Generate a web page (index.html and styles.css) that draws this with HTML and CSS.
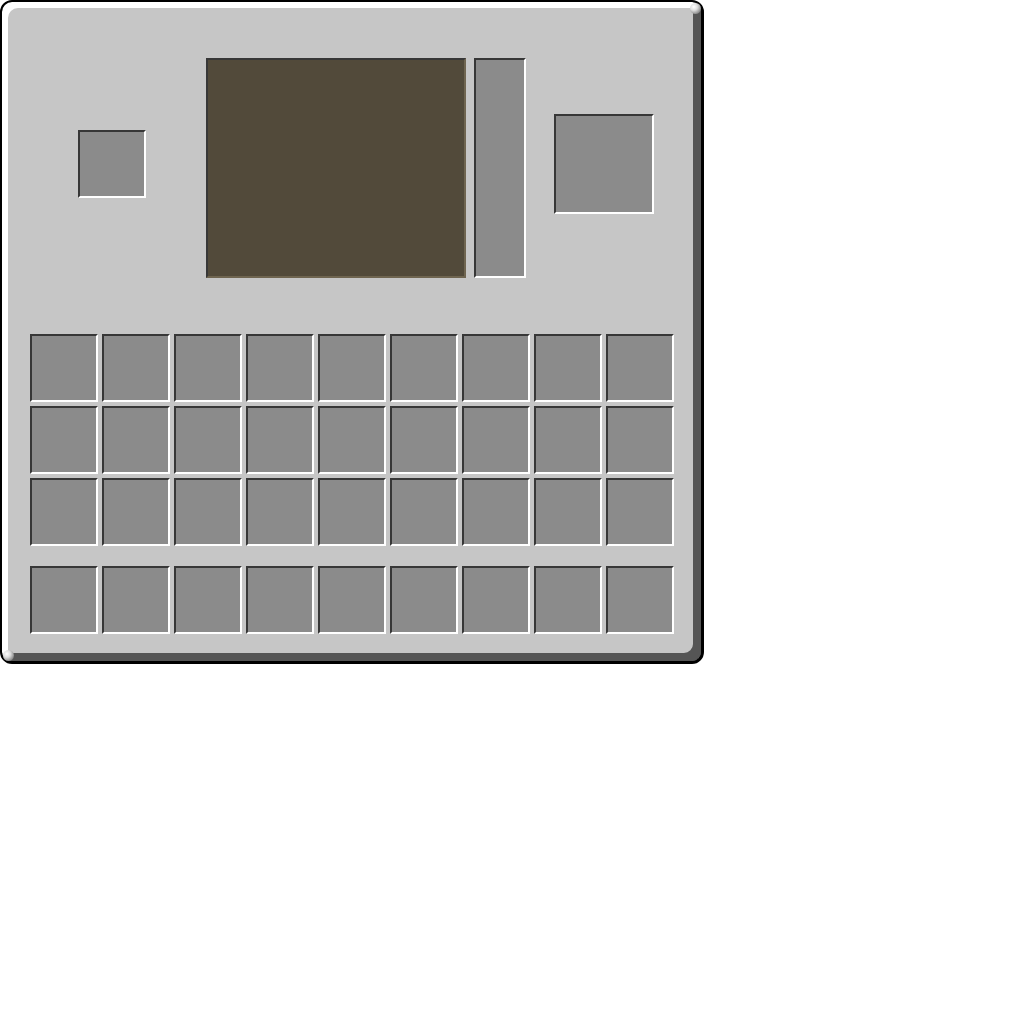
FILE: index.html
```html
<!DOCTYPE html>
<html lang="en">
<head>
    <meta charset="UTF-8">
    <title>Inventory</title>
    <link rel="stylesheet" href="styles.css">
</head>
<body>
    <div class="inventory">
        <div class="top-row">
            <div class="slot small-slot"></div>
            <div class="preview"></div>
            <div class="side-bar"></div>
            <div class="slot result-slot"></div>
        </div>

        <div class="grid" id="mainGrid"></div>
        <div class="grid hotbar" id="hotbar"></div>
    </div>

    <script>
        function fillSlots(id, count) {
            const grid = document.getElementById(id);
            for (let i = 0; i < count; i++) {
                const slot = document.createElement('div');
                slot.className = 'slot';
                grid.appendChild(slot);
            }
        }
        fillSlots('mainGrid', 27);
        fillSlots('hotbar', 9);
    </script>
</body>
</html>
```

FILE: styles.css
```css
body { margin: 0; background-color: #fff; }

.inventory {
    position: relative;
    box-sizing: border-box;
    width: 704px;
    height: 664px;
    padding: 56px 0 0 28px;
    background-color: #c6c6c6;
    border: solid #000;
    border-width: 2px 3px 3px 2px;
    border-radius: 12px;
    box-shadow: inset 6px 6px 0 #fff, inset -8px -8px 0 #555;
}

/* shaded corners where the light and dark edges meet */
.inventory::before,
.inventory::after {
    content: "";
    position: absolute;
    width: 11px;
    height: 11px;
    border-radius: 50%;
    background: radial-gradient(circle at 35% 35%, #fff 0%, #ddd 35%, #888 75%, #555 100%);
}
.inventory::before { top: 1px; right: 0; }
.inventory::after { bottom: 0; left: 1px; }

.top-row { display: flex; align-items: flex-start; height: 220px; }

.slot {
    box-sizing: border-box;
    width: 68px;
    height: 68px;
    background-color: #8b8b8b;
    border: 2px solid;
    border-color: #373737 #fff #fff #373737;
}

.small-slot { margin: 72px 0 0 48px; }

.preview {
    box-sizing: border-box;
    width: 260px;
    height: 220px;
    margin-left: 60px;
    background-color: #524a3a;
    border: 2px solid;
    border-color: #373737 #6f6550 #6f6550 #373737;
}

.side-bar {
    box-sizing: border-box;
    width: 52px;
    height: 220px;
    margin-left: 8px;
    background-color: #8b8b8b;
    border: 2px solid;
    border-color: #373737 #fff #fff #373737;
}

.result-slot { width: 100px; height: 100px; margin: 56px 0 0 28px; }

.grid {
    display: grid;
    grid-template-columns: repeat(9, 68px);
    gap: 4px;
    margin-top: 56px;
}

.hotbar { margin-top: 20px; }
```
